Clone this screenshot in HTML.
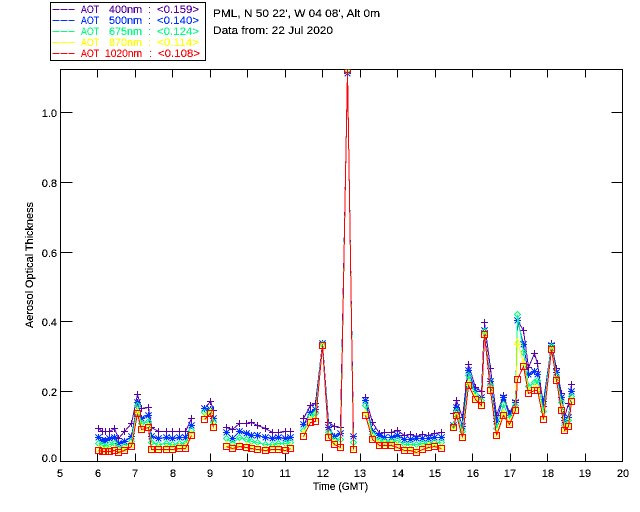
<!DOCTYPE html>
<html><head><meta charset="utf-8"><style>
html,body{margin:0;padding:0;background:#fff;width:640px;height:512px;overflow:hidden}
svg{display:block}
text{font-family:"Liberation Sans",sans-serif;font-size:11px}
.s{fill:none;stroke-width:1;shape-rendering:crispEdges}
</style></head><body>
<svg width="640" height="512" viewBox="0 0 640 512" xmlns="http://www.w3.org/2000/svg">
<defs>
<clipPath id="c"><rect x="60" y="69" width="562" height="392"/></clipPath>
<filter id="a" x="-5%" y="-5%" width="110%" height="110%" color-interpolation-filters="sRGB"><feComponentTransfer><feFuncA type="discrete" tableValues="0 1 1"/></feComponentTransfer></filter>
<marker id="p" markerUnits="userSpaceOnUse" markerWidth="12" markerHeight="12" refX="6" refY="6" viewBox="0 0 12 12" overflow="visible"><path d="M6 2.5V9.5M2.5 6H9.5" fill="none" stroke="#5a00a5" shape-rendering="crispEdges"/></marker>
<marker id="b" markerUnits="userSpaceOnUse" markerWidth="12" markerHeight="12" refX="6" refY="6" viewBox="0 0 12 12" overflow="visible"><path d="M6 2.5V9.5M2.5 6H9.5M3 3L9 9M3 9L9 3" fill="none" stroke="#0032ff" shape-rendering="crispEdges"/></marker>
<marker id="g" markerUnits="userSpaceOnUse" markerWidth="12" markerHeight="12" refX="6" refY="6" viewBox="0 0 12 12" overflow="visible"><path d="M6 3L9 6 6 9 3 6Z" fill="none" stroke="#00ff80" shape-rendering="crispEdges"/></marker>
<marker id="y" markerUnits="userSpaceOnUse" markerWidth="12" markerHeight="12" refX="6" refY="6" viewBox="0 0 12 12" overflow="visible"><path d="M6 3L9 9H3Z" fill="none" stroke="#ffff00" shape-rendering="crispEdges"/></marker>
<marker id="r" markerUnits="userSpaceOnUse" markerWidth="12" markerHeight="12" refX="6" refY="6" viewBox="0 0 12 12" overflow="visible"><rect x="3" y="3" width="6" height="6" fill="none" stroke="#ff0000" stroke-width="1" shape-rendering="crispEdges"/></marker>
</defs>

<g transform="translate(.5 .5)">
<!-- frame and ticks -->
<path class="s" stroke="#000" d="M60 69H622V461H60ZM60 391H72M60 321H72M60 252H72M60 182H72M60 112H72M622 391H611M622 321H611M622 252H611M622 182H611M622 112H611M97 461V453M135 461V453M172 461V453M210 461V453M247 461V453M285 461V453M322 461V453M360 461V453M397 461V453M435 461V453M472 461V453M510 461V453M547 461V453M585 461V453M97 69V77M135 69V77M172 69V77M210 69V77M247 69V77M285 69V77M322 69V77M360 69V77M397 69V77M435 69V77M472 69V77M510 69V77M547 69V77M585 69V77"/>
<!-- legend -->
<rect class="s" x="50" y="2" width="155" height="58" stroke="#000"/>
<path class="s" stroke="#5a00a5" d="M52 9H74" stroke-dasharray="7 1"/>
<path class="s" stroke="#0032ff" d="M52 20H74" stroke-dasharray="7 1"/>
<path class="s" stroke="#00ff80" d="M52 31H74" stroke-dasharray="7 1"/>
<path class="s" stroke="#ffff00" d="M52 42H74" stroke-dasharray="7 1"/>
<path class="s" stroke="#ff0000" d="M52 53H74" stroke-dasharray="7 1"/>

<g clip-path="url(#c)">
<!-- 400 -->
<path class="s" stroke="#5a00a5" marker-start="url(#p)" marker-mid="url(#p)" marker-end="url(#p)" d="M98 428 102 431 105 431 109 431 114 428 118 438 124 431 131 423 137 394 141 408 148 407 151 427 158 431 166 431 172 431 179 431 185 431 191 418M204 408 210 401 213 410M226 427 232 429 239 423 246 423 251 422 257 425 265 428 272 432 278 432 285 431 290 431M303 418 310 405 315 403 322 343 328 422 334 426 340 427 347 73 353 436M365 397 372 422 379 433 384 432 391 432 397 430 404 435 410 434 416 436 422 434 428 435 434 433 441 432M453 413 456 400 462 417 468 364 475 387 481 391 484 322 490 368 496 415 503 395 509 413 515 400 517 320 523 330 528 367 534 353 537 363 543 406 551 343 556 368 561 393 564 417 568 403 571 384"/>
<!-- 500 -->
<path class="s" stroke="#0032ff" marker-start="url(#b)" marker-mid="url(#b)" marker-end="url(#b)" d="M98 437 102 440 105 440 109 438 114 437 118 443 124 441 131 436 137 402 141 418 148 415 151 436 158 438 166 437 172 438 179 437 185 437 191 425M204 408 210 409 213 418M226 432 232 438 239 431 246 433 251 435 257 435 265 437 272 438 278 437 285 438 290 437M303 424 310 412 315 409 322 343 328 427 334 436 340 433 347 73 353 436M365 400 372 431 379 435 384 437 391 437 397 435 404 439 410 439 416 438 422 438 428 438 434 437 441 437M453 425 456 407 462 426 468 370 475 391 481 397 484 330 490 381 496 421 503 397 509 415 515 402 517 320 523 344 528 374 534 371 537 374 543 401 551 345 556 372 561 397 564 420 568 417 571 391"/>
<!-- 675 -->
<path class="s" stroke="#00ff80" marker-start="url(#g)" marker-mid="url(#g)" marker-end="url(#g)" d="M98 443 102 445 105 446 109 444 114 443 118 448 124 446 131 441 137 405 141 423 148 421 151 442 158 444 166 443 172 444 179 443 185 443 191 430M204 412 210 411 213 422M226 438 232 443 239 437 246 439 251 441 257 442 265 444 272 444 278 443 285 443 290 442M303 430 310 416 315 413 322 344 328 432 334 440 340 439 347 71 353 442M365 405 372 434 379 440 384 441 391 441 397 440 404 444 410 444 416 444 422 443 428 443 434 442 441 442M453 425 456 411 462 431 468 375 475 394 481 400 484 331 490 385 496 428 503 404 509 418 515 405 517 314 523 352 528 386 534 382 537 380 543 411 551 346 556 376 561 402 564 425 568 420 571 396"/>
<!-- 870 -->
<path class="s" stroke="#ffff00" marker-start="url(#y)" marker-mid="url(#y)" marker-end="url(#y)" d="M98 448 102 449 105 449 109 449 114 448 118 450 124 448 131 444 137 410 141 427 148 425 151 447 158 447 166 447 172 447 179 446 185 446 191 433M204 416 210 411 213 425M226 444 232 446 239 444 246 445 251 446 257 447 265 448 272 447 278 447 285 448 290 446M303 433 310 419 315 418 322 345 328 435 334 442 340 445 347 69 353 447M365 412 372 437 379 443 384 443 391 443 397 445 404 448 410 448 416 450 422 447 428 445 434 444 441 446M453 426 456 414 462 435 468 382 475 397 481 403 484 333 490 388 496 433 503 412 509 422 515 408 517 341 523 362 528 390 534 387 537 387 543 416 551 348 556 378 561 407 564 428 568 424 571 399"/>
<!-- 1020 -->
<path class="s" stroke="#ff0000" marker-start="url(#r)" marker-mid="url(#r)" marker-end="url(#r)" d="M98 450 102 451 105 451 109 451 114 450 118 452 124 450 131 446 137 413 141 429 148 427 151 449 158 449 166 449 172 449 179 448 185 448 191 435M204 419 210 413 213 427M226 446 232 448 239 446 246 447 251 448 257 449 265 450 272 449 278 449 285 450 290 448M303 436 310 422 315 421 322 345 328 437 334 444 340 447 347 69 353 449M365 415 372 439 379 445 384 445 391 445 397 447 404 450 410 450 416 452 422 449 428 447 434 446 441 448M453 427 456 415 462 437 468 385 475 399 481 405 484 334 490 390 496 435 503 415 509 424 515 410 517 379 523 366 528 393 534 390 537 390 543 419 551 349 556 380 561 410 564 430 568 426 571 401"/>
</g>
</g>

<g filter="url(#a)">
<g fill="#5a00a5"><text x="81" y="13" textLength="18" lengthAdjust="spacingAndGlyphs">AOT</text><text x="109" y="13" textLength="33" lengthAdjust="spacingAndGlyphs">400nm</text><text x="148" y="13">:</text><text x="157" y="13" textLength="42" lengthAdjust="spacingAndGlyphs">&lt;0.159&gt;</text></g>
<g fill="#0032ff"><text x="81" y="24" textLength="18" lengthAdjust="spacingAndGlyphs">AOT</text><text x="109" y="24" textLength="33" lengthAdjust="spacingAndGlyphs">500nm</text><text x="148" y="24">:</text><text x="157" y="24" textLength="42" lengthAdjust="spacingAndGlyphs">&lt;0.140&gt;</text></g>
<g fill="#00ff80"><text x="81" y="35" textLength="18" lengthAdjust="spacingAndGlyphs">AOT</text><text x="109" y="35" textLength="33" lengthAdjust="spacingAndGlyphs">675nm</text><text x="148" y="35">:</text><text x="157" y="35" textLength="42" lengthAdjust="spacingAndGlyphs">&lt;0.124&gt;</text></g>
<g fill="#ffff00"><text x="81" y="46" textLength="18" lengthAdjust="spacingAndGlyphs">AOT</text><text x="109" y="46" textLength="33" lengthAdjust="spacingAndGlyphs">870nm</text><text x="148" y="46">:</text><text x="157" y="46" textLength="42" lengthAdjust="spacingAndGlyphs">&lt;0.114&gt;</text></g>
<g fill="#ff0000"><text x="81" y="57" textLength="18" lengthAdjust="spacingAndGlyphs">AOT</text><text x="105" y="57" textLength="37" lengthAdjust="spacingAndGlyphs">1020nm</text><text x="149" y="57">:</text><text x="158" y="57" textLength="42" lengthAdjust="spacingAndGlyphs">&lt;0.108&gt;</text></g>
<text x="213" y="17" textLength="167" lengthAdjust="spacingAndGlyphs">PML, N 50 22', W 04 08', Alt 0m</text>
<text x="213" y="34" textLength="120" lengthAdjust="spacingAndGlyphs">Data from: 22 Jul 2020</text>
<g text-anchor="end"><text x="57" y="462">0.0</text><text x="57" y="396">0.2</text><text x="57" y="326">0.4</text><text x="57" y="257">0.6</text><text x="57" y="187">0.8</text><text x="57" y="117">1.0</text></g>
<g text-anchor="middle"><text x="60" y="477">5</text><text x="98" y="477">6</text><text x="135" y="477">7</text><text x="173" y="477">8</text><text x="210" y="477">9</text><text x="248" y="477">10</text><text x="285" y="477">11</text><text x="323" y="477">12</text><text x="360" y="477">13</text><text x="398" y="477">14</text><text x="435" y="477">15</text><text x="473" y="477">16</text><text x="510" y="477">17</text><text x="548" y="477">18</text><text x="585" y="477">19</text><text x="623" y="477">20</text></g>
<text x="313" y="490" textLength="55" lengthAdjust="spacingAndGlyphs">Time (GMT)</text>
<text transform="translate(33 328) rotate(-90)" textLength="126" lengthAdjust="spacingAndGlyphs">Aerosol Optical Thickness</text>
</g>
</svg>
</body></html>
